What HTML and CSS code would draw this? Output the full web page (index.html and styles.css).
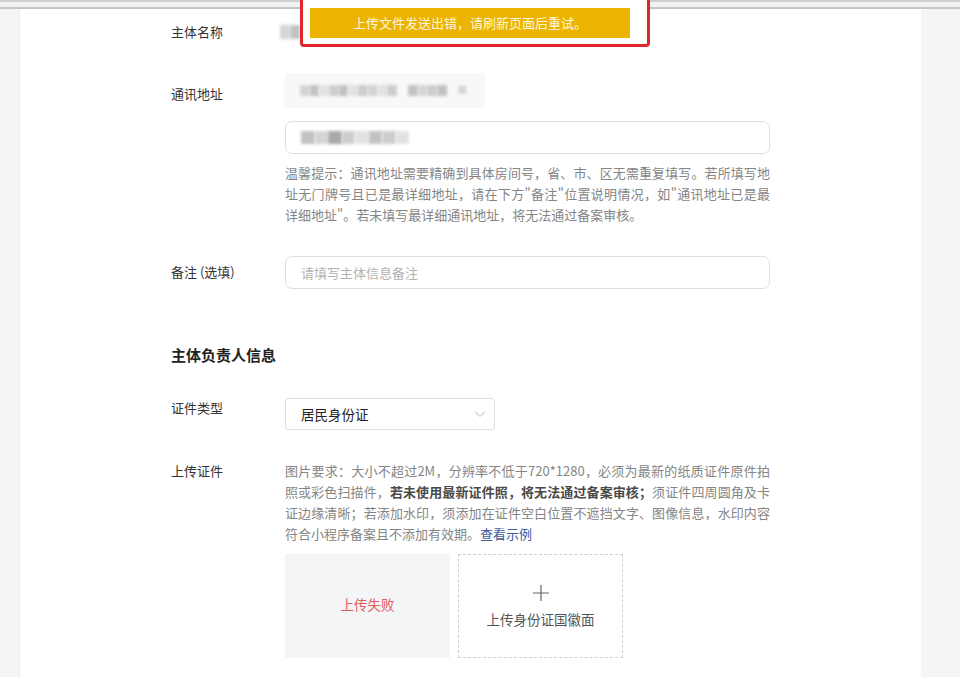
FILE: index.html
```html
<!DOCTYPE html>
<html lang="zh-CN">
<head>
    <meta charset="UTF-8">
    <meta name="viewport" content="width=device-width, initial-scale=1.0">
    <title>主体信息</title>
    <link rel="stylesheet" href="styles.css">
</head>
<body>

    <div class="chrome"></div>

    <main class="panel">
        <div class="row row-name">
            <div class="label">主体名称</div>
            <div class="field">
                <div class="masked masked-name">
                    <span class="m1"></span><span class="m2"></span>
                </div>
            </div>
        </div>

        <div class="row row-addr">
            <div class="label">通讯地址</div>
            <div class="field">
                <div class="masked masked-region">
                    <span class="m1"></span><span class="m2"></span><span class="m3"></span><span class="m4"></span><span class="m2"></span><span class="m3"></span><span class="m4"></span><span class="m1"></span><span class="m3"></span><span class="m4"></span><span class="gap"></span><span class="m2"></span><span class="m1"></span><span class="m4"></span><span class="m2"></span><span class="gap"></span><span class="m5 dot"></span>
                </div>
                <div class="input masked-input">
                    <span class="m2"></span><span class="m1"></span><span class="m5"></span><span class="m4"></span><span class="m3"></span><span class="m2"></span><span class="m4"></span><span class="m3"></span>
                </div>
                <p class="hint">
                    <span class="line">温馨提示：通讯地址需要精确到具体房间号，省、市、区无需重复填写。若所填写地</span>
                    <span class="line">址无门牌号且已是最详细地址，请在下方"备注"位置说明情况，如"通讯地址已是最</span>
                    <span>详细地址"。若未填写最详细通讯地址，将无法通过备案审核。</span>
                </p>
            </div>
        </div>

        <div class="row row-remark">
            <div class="label">备注 (选填)</div>
            <div class="field">
                <input class="input" type="text" placeholder="请填写主体信息备注">
            </div>
        </div>

        <h3 class="section-title">主体负责人信息</h3>

        <div class="row row-type">
            <div class="label">证件类型</div>
            <div class="field">
                <div class="select">
                    <span>居民身份证</span>
                    <svg width="12" height="8" viewBox="0 0 12 8"><path d="M1 1.5 L6 6.5 L11 1.5" fill="none" stroke="#b5b5b5" stroke-width="1"/></svg>
                </div>
            </div>
        </div>

        <div class="row row-upload">
            <div class="label">上传证件</div>
            <div class="field">
                <p class="hint">
                    <span class="line">图片要求：大小不超过2M，分辨率不低于720*1280，必须为最新的纸质证件原件拍</span>
                    <span class="line">照或彩色扫描件，<b>若未使用最新证件照，将无法通过备案审核；</b>须证件四周圆角及卡</span>
                    <span class="line">证边缘清晰；若添加水印，须添加在证件空白位置不遮挡文字、图像信息，水印内容</span>
                    <span>符合小程序备案且不添加有效期。<a href="#">查看示例</a></span>
                </p>
                <div class="uploads">
                    <div class="upload upload-failed">上传失败</div>
                    <div class="upload upload-empty">
                        <svg width="18" height="18" viewBox="0 0 18 18"><path d="M9 1 V17 M1 9 H17" stroke="#666" stroke-width="1.2"/></svg>
                        <span>上传身份证国徽面</span>
                    </div>
                </div>
            </div>
        </div>
    </main>

    <div class="annotation">
        <div class="toast">上传文件发送出错，请刷新页面后重试。</div>
    </div>

</body>
</html>
```

FILE: styles.css
```css
* { box-sizing: border-box; }
html, body { margin: 0; padding: 0; }
body { font-family: "Noto Sans CJK SC", "Noto Sans", sans-serif; background: #f4f5f7; color: #333; height: 677px; overflow: hidden; position: relative; }

.chrome { height: 9px; background: #f2f2f2; border-top: 2px solid #cfcfcf; border-bottom: 2px solid #c6c6c6; }

.panel { margin-left: 20px; width: 901px; min-height: 700px; background: #fff; padding: 6px 0 0 151px; box-shadow: -1px 0 3px rgba(0,0,0,0.04); }

.row { display: flex; }
.label { width: 114px; flex: none; font-size: 13px; line-height: 20px; color: #333; }
.field { width: 485px; }

.row-name .label { padding-top: 7px; }
.row-addr { margin-top: 24px; }
.row-addr .label { padding-top: 11px; }
.row-remark { margin-top: 31px; }
.row-remark .label { padding-top: 6px; }
.row-type { margin-top: 32px; }
.row-type .label { padding-top: 0; }
.row-upload { margin-top: 30px; }
.row-upload .label { line-height: 21px; }

.masked { display: flex; align-items: center; height: 34px; }
.masked span, .masked-input span { display: inline-block; height: 11px; width: 9.7px; filter: blur(1.4px); }
.masked .gap { width: 11px; background: transparent; }
.masked .dot { width: 8px; height: 8px; background: #d6d6d8; }
.m1 { background: #d4d4d6; }
.m2 { background: #c2c2c4; }
.m3 { background: #e2e2e4; }
.m4 { background: #cdcdcf; }
.m5 { background: #a9a9ab; }

.masked-name { width: 200px; margin-left: -5px; }
.masked-name span { width: 10px; height: 14px; }
.masked-region { width: 200px; background: #f7f8fa; border-radius: 4px; padding-left: 15px; box-shadow: 0 1px 2px rgba(0,0,0,0.05); }

.input { display: block; width: 485px; height: 33px; border: 1px solid #dedfe3; border-radius: 7px; padding: 0 15px; font-family: inherit; font-size: 13px; color: #333; background: #fff; outline: none; }
.input::placeholder { color: #b3b3b3; }
.masked-input { display: flex; align-items: center; margin-top: 14px; }
.masked-input span { height: 13px; width: 13.5px; }

.hint { margin: 8px 0 0; font-size: 13px; line-height: 21px; color: #858585; }
.hint .line { display: block; text-align: justify; text-align-last: justify; }
.hint b { color: #4a4a4a; font-weight: bold; }
.hint a { color: #3d5a99; text-decoration: none; }
.row-upload .hint { margin-top: 0; }

.section-title { margin: 55px 0 0; font-size: 15px; line-height: 22px; font-weight: bold; color: #222; }

.select { width: 210px; height: 32px; border: 1px solid #dedfe3; border-radius: 3px; display: flex; align-items: center; justify-content: space-between; padding: 0 8px 0 15px; font-size: 13.5px; color: #222; }

.uploads { display: flex; gap: 8px; margin-top: 10px; }
.upload { width: 165px; height: 104px; display: flex; flex-direction: column; align-items: center; justify-content: center; font-size: 13.5px; }
.upload-failed { background: #f4f5f7; color: #e35b5f; padding-bottom: 4px; }
.upload-empty { border: 1px dashed #cfcfcf; color: #555; gap: 7px; }

.annotation { position: absolute; left: 300px; top: -5px; width: 350px; height: 52px; border: 3px solid #e1252b; border-radius: 4px; background: #fff; padding: 10px 0 0 7px; }
.toast { width: 320px; height: 30px; background: #ecb400; color: #fdf6dc; font-size: 13px; line-height: 30px; text-align: center; }
```
